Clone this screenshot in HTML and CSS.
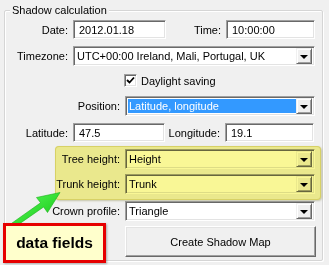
FILE: index.html
```html
<!DOCTYPE html>
<html>
<head>
<meta charset="utf-8">
<link rel="stylesheet" href="styles.css">
</head>
<body>
<div class="panel">
  <div class="legend">Shadow calculation</div>
  <div class="row r1">
    <div class="lbl s">Date:</div>
    <div class="field w-date">2012.01.18</div>
    <div class="lbl t">Time:</div>
    <div class="field w-time">10:00:00</div>
  </div>
  <div class="row r2">
    <div class="lbl s">Timezone:</div>
    <div class="select w-tz"><span class="val">UTC+00:00 Ireland, Mali, Portugal, UK</span><span class="drop"><i></i></span></div>
  </div>
  <div class="row r3">
    <span class="check"><svg width="9" height="9" viewBox="0 0 9 9"><path d="M1 4 L3.5 6.5 L8 1.5" fill="none" stroke="#000" stroke-width="1.8"/></svg></span>
    <span>Daylight saving</span>
  </div>
  <div class="row r4">
    <div class="lbl l">Position:</div>
    <div class="select w-long"><span class="val sel">Latitude, longitude</span><span class="drop"><i></i></span></div>
  </div>
  <div class="row r5">
    <div class="lbl s">Latitude:</div>
    <div class="field w-lat">47.5</div>
    <div class="lbl t">Longitude:</div>
    <div class="field w-time">19.1</div>
  </div>
  <div class="row r6">
    <div class="lbl l">Tree height:</div>
    <div class="select w-long"><span class="val">Height</span><span class="drop"><i></i></span></div>
  </div>
  <div class="row r7">
    <div class="lbl l">Trunk height:</div>
    <div class="select w-long"><span class="val">Trunk</span><span class="drop"><i></i></span></div>
  </div>
  <div class="row r8">
    <div class="lbl l">Crown profile:</div>
    <div class="select w-long"><span class="val">Triangle</span><span class="drop"><i></i></span></div>
  </div>
  <div class="row r9">
    <div class="btn">Create Shadow Map</div>
  </div>
</div>
<div class="highlight"></div>
<svg class="arrow" width="329" height="265" viewBox="0 0 329 265">
  <defs>
    <linearGradient id="g" x1="0" y1="0" x2="1" y2="1">
      <stop offset="0" stop-color="#5cff5c"/>
      <stop offset="1" stop-color="#10c010"/>
    </linearGradient>
  </defs>
  <polygon points="11.8,223.2 40.6,202.8 36.5,197.5 60,192.5 47.5,212.5 43.6,207 14.6,227.2" fill="url(#g)" stroke="#18b018" stroke-width="0.6"/>
</svg>
<div class="note">data fields</div>
</body>
</html>
```
FILE: styles.css
```css
body {
  margin: 0;
  width: 329px;
  height: 265px;
  overflow: hidden;
  position: relative;
  background: #f0f0f0;
  font: 11px "Liberation Sans", Arial, sans-serif;
  color: #000;
}
.panel {
  margin: 10px 0 0 4px;
  width: 319px;
  height: 251px;
  box-sizing: border-box;
  border: 1px solid #d5d5d5;
  border-radius: 2px;
  box-shadow: inset 1px 1px 0 #fff, 1px 1px 0 #fff;
}
.legend {
  width: max-content;
  margin: -8px 0 0 5px;
  padding: 0 2px;
  background: #f0f0f0;
  line-height: 14px;
}
.row {
  display: flex;
  align-items: center;
}
.r1 { margin-top: 3px; }
.r2 { margin-top: 7px; }
.r3 { margin-top: 8px; padding-left: 119px; height: 13px; }
.r4 { margin-top: 9px; }
.r5 { margin-top: 7px; }
.r6 { margin-top: 7px; }
.r7 { margin-top: 5px; }
.r8 { margin-top: 7px; }
.r9 { margin-top: 5px; padding-left: 120px; }
.lbl {
  flex: none;
  text-align: right;
  margin-right: 5px;
  white-space: nowrap;
}
.lbl.s { width: 63px; }
.lbl.l { width: 115px; }
.lbl.t { width: 55px; }
.field, .select {
  flex: none;
  box-sizing: border-box;
  border: 1px solid;
  border-color: #a0a0a0 #fff #fff #a0a0a0;
  box-shadow: inset 1px 1px 0 #696969, inset -1px -1px 0 #e3e3e3;
  background: #fff;
  display: flex;
  align-items: center;
  white-space: nowrap;
}
.field {
  height: 19px;
  padding-left: 5px;
}
.w-date { width: 93px; }
.w-lat { width: 92px; }
.w-time { width: 89px; }
.select {
  height: 20px;
  padding: 2px;
}
.w-tz { width: 242px; }
.w-long { width: 190px; }
.val {
  flex: 1;
  height: 100%;
  display: flex;
  align-items: center;
  padding-left: 1px;
  overflow: hidden;
}
.val.sel {
  background: #3399ff;
  color: #fff;
}
.drop {
  flex: none;
  width: 16px;
  height: 16px;
  box-sizing: border-box;
  border: 1px solid;
  border-color: #f0f0f0 #696969 #696969 #f0f0f0;
  box-shadow: inset 1px 1px 0 #fff, inset -1px -1px 0 #a0a0a0;
  background: #f0f0f0;
  display: flex;
  align-items: center;
  justify-content: center;
}
.drop i {
  width: 0;
  height: 0;
  border-left: 4px solid transparent;
  border-right: 4px solid transparent;
  border-top: 4px solid #000;
  margin-top: 1px;
}
.check {
  width: 13px;
  height: 13px;
  box-sizing: border-box;
  border: 1px solid;
  border-color: #a0a0a0 #fff #fff #a0a0a0;
  box-shadow: inset 1px 1px 0 #696969, inset -1px -1px 0 #e3e3e3;
  background: #fff;
  display: flex;
  align-items: center;
  justify-content: center;
  margin-right: 4px;
}
.btn {
  width: 191px;
  height: 31px;
  box-sizing: border-box;
  border: 1px solid;
  border-color: #fff #696969 #696969 #fff;
  box-shadow: inset -1px -1px 0 #a0a0a0, inset 1px 1px 0 #e3e3e3;
  background: #f0f0f0;
  display: flex;
  align-items: center;
  justify-content: center;
}
.highlight {
  position: absolute;
  left: 55px;
  top: 146px;
  width: 266px;
  height: 54px;
  border-radius: 4px;
  background: #f9f796;
  mix-blend-mode: multiply;
  box-shadow: inset 0 0 0 1px rgba(215, 205, 80, 0.6), 1px 1px 2px rgba(120, 120, 40, 0.35);
}
.arrow {
  position: absolute;
  left: 0;
  top: 0;
}
.note {
  position: absolute;
  left: 3px;
  top: 223px;
  width: 103px;
  height: 40px;
  box-sizing: border-box;
  border: 3px solid #e60000;
  background: #ffffcc;
  display: flex;
  align-items: center;
  justify-content: center;
  font-weight: bold;
  font-size: 15.5px;
  box-shadow: 1px 1px 2px rgba(0, 0, 0, 0.3);
}
```
